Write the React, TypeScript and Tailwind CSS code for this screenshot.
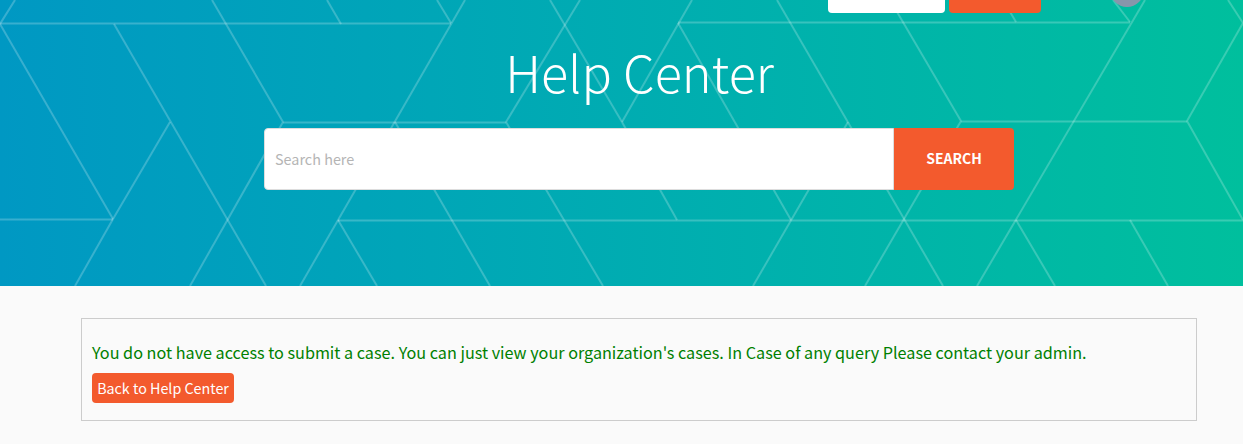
const lines: [number, number, number, number][] = [
  [0, 23.5, 451, 23.5], [678, 22.5, 1130, 22.5],
  [283, 122.5, 506, 122.5], [961, 121.5, 1187, 121.5],
  [0, 219.5, 113, 219.5], [338, 220.5, 1243, 220.5],
  [15, 0, 0, 24], [0, 24, 113, 219], [113, 219, 75, 286], [113, 219, 170, 122],
  [114, 24, 266, 286], [212, 0, 283, 122], [190, 286, 283, 122], [327, 0, 341, 24],
  [465, 0, 300, 286], [338, 220, 377, 286], [437, 0, 451, 23], [395, 122, 490, 286],
  [580, 0, 506, 122], [506, 122, 603, 286], [550, 0, 622, 122], [692, 0, 622, 122],
  [622, 122, 677, 220], [678, 23, 791, 220], [777, 0, 943, 286], [753, 286, 848, 122],
  [890, 0, 961, 121], [961, 121, 865, 286], [1003, 0, 1016, 22], [977, 286, 1145, 0],
  [1016, 220, 1055, 286], [1113, 0, 1130, 22], [1187, 121, 1243, 23], [1243, 23, 1228, 0],
  [1187, 121, 1243, 220], [1130, 220, 1168, 286],
];

const font = { fontFamily: '"Noto Sans CJK JP", "Open Sans", sans-serif' };

export default function App() {
  return (
    <div style={font} className="min-h-[444px] bg-[#fafafa]">
      <section className="relative h-[286px] overflow-hidden bg-gradient-to-r from-[#0098c3] to-[#00bf9d]">
        <svg className="absolute inset-0" width="1243" height="286" fill="none" stroke="#ffffff" strokeOpacity="0.22" strokeWidth="2">
          {lines.map((l, i) => (
            <line key={i} x1={l[0]} y1={l[1]} x2={l[2]} y2={l[3]} />
          ))}
        </svg>
        <div className="relative">
          <div className="flex h-[13px] items-end">
            <div className="ml-[828px] h-10 w-[117px] shrink-0 rounded-[4px] bg-white" />
            <div className="ml-1 h-10 w-[92px] shrink-0 rounded-[4px] bg-[#f35a2d]" />
            <div className="mb-[6.5px] ml-[68.5px] h-[34px] w-[34px] shrink-0 rounded-full bg-[#8796ab]" />
          </div>
          <h1 className="mt-[23px] pl-[36px] text-center text-[50.4px] font-light leading-[72px] text-white">Help Center</h1>
          <form className="ml-[264px] mt-[20px] flex h-[62px] w-[750px]">
            <input
              placeholder="Search here"
              className="h-full w-[630px] rounded-l-[4px] border border-[#dddddd] bg-white px-[10px] pb-[2px] text-[14.4px] text-gray-700 outline-none placeholder:text-[#b5b5b5]"
            />
            <button type="button" className="h-full w-[120px] rounded-r-[4px] bg-[#f35a2d] pb-[1px] text-[14px] font-semibold text-white">
              SEARCH
            </button>
          </form>
        </div>
      </section>
      <div className="ml-[81px] mt-8 h-[103px] w-[1116px] border border-[#cccccc] px-[10px] pt-[21px]">
        <p className="text-[16.2px] leading-[24px] text-[#008000]">
          You do not have access to submit a case. You can just view your organization's cases. In Case of any query Please contact your admin.
        </p>
        <button type="button" className="mt-[9px] block h-[30px] w-[142px] rounded-[4px] bg-[#f35a2d] text-center text-[14.3px] text-white">
          Back to Help Center
        </button>
      </div>
    </div>
  );
}
